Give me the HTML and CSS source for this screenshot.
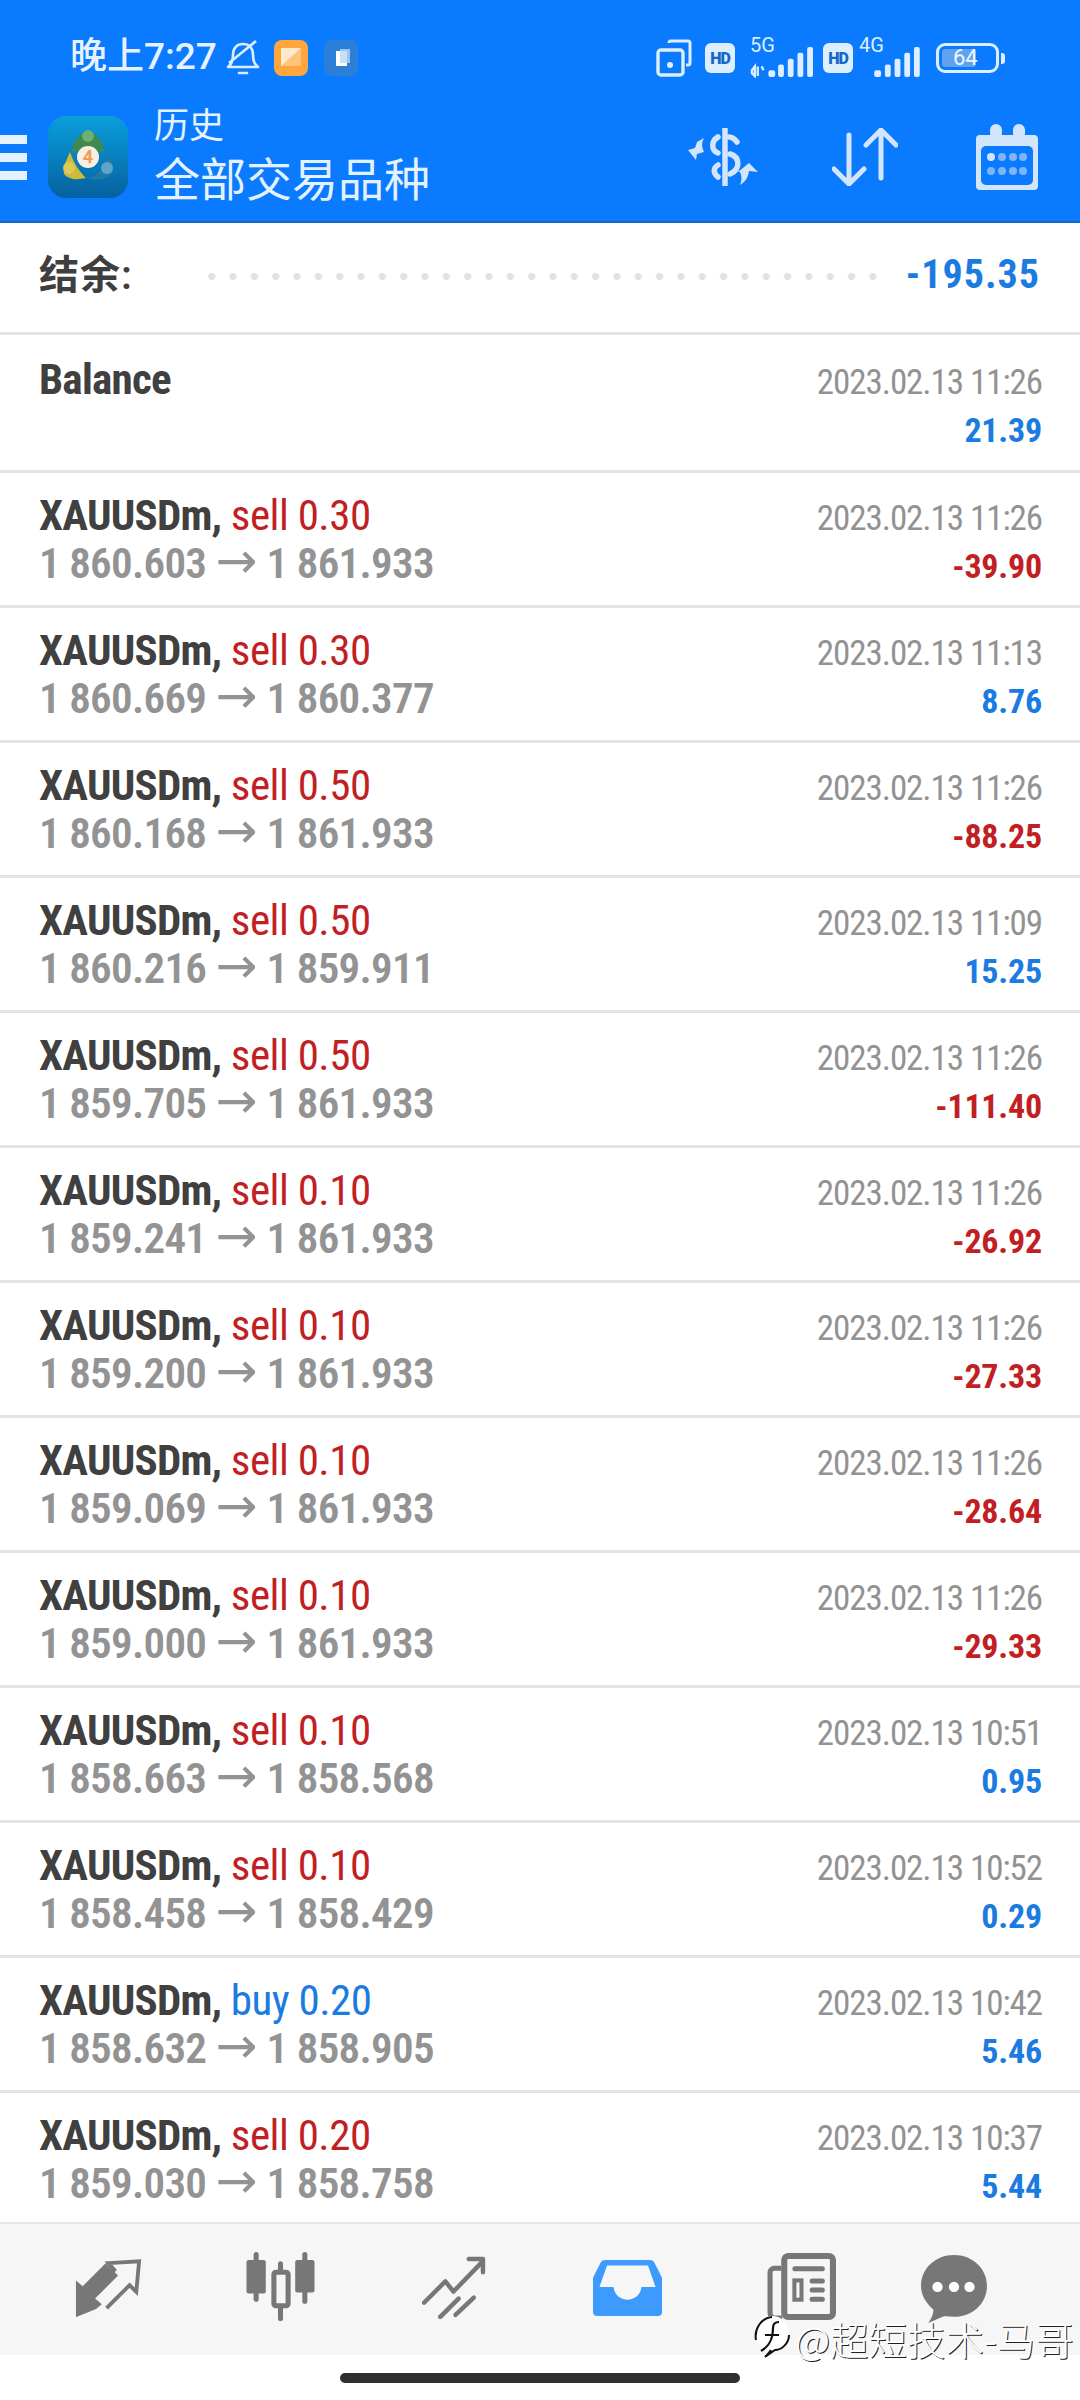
FILE: index.html
```html
<!DOCTYPE html>
<html lang="zh">
<head>
<meta charset="utf-8">
<title>历史</title>
<link rel="stylesheet" href="styles.css">
</head>
<body>
<div class="phone">
<header class="top">
  <div class="status">
    <div class="status-left">
      <span class="clock">晚上7:27</span>
      <svg class="bell" viewBox="0 0 36 38"><path d="M3 28c4-3 5-6 5-12 0-7 4-11 10-11s10 4 10 11c0 6 1 9 5 12z" fill="none" stroke="#dceeff" stroke-width="2.6" stroke-linejoin="round"/><path d="M14 34h8" stroke="#dceeff" stroke-width="2.6" stroke-linecap="round"/><path d="M4 24L31 2" stroke="#dceeff" stroke-width="2.6"/></svg>
      <svg class="app-a" viewBox="0 0 34 36"><rect width="34" height="36" rx="8" fill="#ffa63e"/><path d="M7 8h20v18H7z" fill="#ffe9cc"/><path d="M27 8v18H7z" fill="#ffc37a"/></svg>
      <svg class="app-b" viewBox="0 0 34 36"><rect width="34" height="36" rx="8" fill="#2c7fd8"/><rect x="12" y="11" width="11" height="15" fill="#fff"/><rect x="16" y="9" width="10" height="14" fill="#b8d8f8" opacity=".8"/></svg>
    </div>
    <div class="status-right">
      <svg class="sr-copy" viewBox="0 0 36 38"><path d="M13 4a2 2 0 0 1 2-2h17a2 2 0 0 1 2 2v20a2 2 0 0 1-2 2h-2" fill="none" stroke="#dceeff" stroke-width="3"/><rect x="2" y="11" width="25" height="25" rx="3" fill="none" stroke="#dceeff" stroke-width="3.4"/><circle cx="14" cy="26" r="3" fill="#dceeff"/></svg>
      <span class="hd">HD</span>
      <span class="sig">
        <span class="sig-label">5G</span>
        <svg class="bars b5" viewBox="0 0 66 32"><path d="M3 24l3-4v10l-3-3zM9 20v10M13 20l2 4" stroke="#dceeff" stroke-width="2.4" fill="none"/><rect x="20" y="24" width="7" height="7" rx="2" fill="#dceeff"/><rect x="30" y="18" width="6" height="13" rx="2" fill="#dceeff"/><rect x="40" y="12" width="6" height="19" rx="2" fill="#dceeff"/><rect x="50" y="6" width="6" height="25" rx="2" fill="#dceeff"/><rect x="60" y="0" width="6" height="31" rx="2" fill="#dceeff"/></svg>
      </span>
      <span class="hd hd2">HD</span>
      <span class="sig">
        <span class="sig-label four">4G</span>
        <svg class="bars b4" viewBox="0 0 48 32"><rect x="0" y="24" width="7" height="7" rx="2" fill="#dceeff"/><rect x="11" y="18" width="6" height="13" rx="2" fill="#dceeff"/><rect x="21" y="12" width="6" height="19" rx="2" fill="#dceeff"/><rect x="31" y="6" width="6" height="25" rx="2" fill="#dceeff"/><rect x="41" y="0" width="6" height="31" rx="2" fill="#dceeff"/></svg>
      </span>
      <span class="battery"><span class="battery-fill"></span><span class="battery-num">64</span></span>
      <span class="battery-tip"></span>
    </div>
  </div>
  <div class="bar">
    <div class="burger"><i></i><i></i><i></i></div>
    <svg class="logo" viewBox="0 0 80 82">
      <defs><linearGradient id="lg" x1="0" y1="0" x2="0" y2="1"><stop offset="0" stop-color="#0a9fdc"/><stop offset="1" stop-color="#06609f"/></linearGradient></defs>
      <rect width="80" height="82" rx="18" fill="url(#lg)"/>
      <path d="M40 14c9 4 16 13 16 23-5-3-10-3-16 1-6-4-11-4-16-1 0-10 7-19 16-23z" fill="#3f8a4c"/>
      <circle cx="40" cy="20" r="6" fill="#6cb070"/>
      <path d="M22 36c-4 8-7 16-6 22 5 6 14 6 22 4-6-6-12-14-16-26z" fill="#cdb93a"/>
      <circle cx="21" cy="52" r="6" fill="#dcca55"/>
      <path d="M60 38c4 6 6 12 5 19-7 7-17 8-25 5 9-2 17-10 20-24z" fill="#1f7aa8"/>
      <circle cx="59" cy="52" r="6" fill="#5aa5c8"/>
      <circle cx="40" cy="41" r="11" fill="#f8efe4"/>
      <text x="40" y="47" class="logo-4">4</text>
    </svg>
    <div class="titles">
      <div class="t1">历史</div>
      <div class="t2">全部交易品种</div>
    </div>
    <div class="actions">
      <svg class="act-a" viewBox="0 0 72 58"><path d="M38 1v56" stroke="#d3e5fb" stroke-width="5.5" stroke-linecap="round"/><path d="M50 14c-3-4-6-5-8-5M31 9c-7 4-7 13 0 16M43 26c10 3 11 15 0 20M31 37c-5 3-5 8 0 12" fill="none" stroke="#d3e5fb" stroke-width="5.5" stroke-linecap="round"/><path d="M1 22l7-2 2-6 7-4c-3 6-2 9 0 14l-7 2-1 6z" fill="#d3e5fb"/><path d="M71 44l-9-1c-1 7-4 11-9 14 2-5 2-9 0-13l-2 0 11-9z" fill="#d3e5fb"/></svg>
      <svg class="act-b" viewBox="0 0 66 58"><path d="M17 7v48M2 41l15 15 15-15M49 2v48M34 17L49 2l15 15" fill="none" stroke="#d3e5fb" stroke-width="5" stroke-linecap="round" stroke-linejoin="round"/></svg>
      <svg class="act-c" viewBox="0 0 62 66"><rect x="0" y="11" width="62" height="55" rx="4" fill="#d3e5fb"/><rect x="5" y="22" width="52" height="39" rx="5" fill="#0a7aff"/><rect x="14" y="0" width="12" height="15" rx="6" fill="#d3e5fb"/><rect x="37" y="0" width="12" height="15" rx="6" fill="#d3e5fb"/><circle cx="15" cy="33" r="4" fill="#d3e5fb"/><circle cx="26" cy="33" r="4" fill="#7fb4f5"/><circle cx="37" cy="33" r="4" fill="#7fb4f5"/><circle cx="47" cy="33" r="4" fill="#7fb4f5"/><circle cx="15" cy="47" r="4" fill="#7fb4f5"/><circle cx="26" cy="47" r="4" fill="#7fb4f5"/><circle cx="37" cy="47" r="4" fill="#7fb4f5"/><circle cx="47" cy="47" r="4" fill="#7fb4f5"/></svg>
    </div>
  </div>
</header>

<section class="summary">
  <span class="sum-label">结余:</span>
  <span class="dots"></span>
  <span class="sum-value">-195.35</span>
</section>

<main class="list">
<section class="row balance">
  <div class="line"><span class="sym">Balance</span><span class="date">2023.02.13 11:26</span></div>
  <div class="line end"><span class="pl pos">21.39</span></div>
</section>

<section class="row">
  <div class="line"><span class="lead"><span class="sym">XAUUSDm,</span> <span class="sell">sell 0.30</span></span><span class="date">2023.02.13 11:26</span></div>
  <div class="line"><span class="price">1 860.603 <span class="arrow">→</span> 1 861.933</span><span class="pl neg">-39.90</span></div>
</section>
<section class="row">
  <div class="line"><span class="lead"><span class="sym">XAUUSDm,</span> <span class="sell">sell 0.30</span></span><span class="date">2023.02.13 11:13</span></div>
  <div class="line"><span class="price">1 860.669 <span class="arrow">→</span> 1 860.377</span><span class="pl pos">8.76</span></div>
</section>
<section class="row">
  <div class="line"><span class="lead"><span class="sym">XAUUSDm,</span> <span class="sell">sell 0.50</span></span><span class="date">2023.02.13 11:26</span></div>
  <div class="line"><span class="price">1 860.168 <span class="arrow">→</span> 1 861.933</span><span class="pl neg">-88.25</span></div>
</section>
<section class="row">
  <div class="line"><span class="lead"><span class="sym">XAUUSDm,</span> <span class="sell">sell 0.50</span></span><span class="date">2023.02.13 11:09</span></div>
  <div class="line"><span class="price">1 860.216 <span class="arrow">→</span> 1 859.911</span><span class="pl pos">15.25</span></div>
</section>
<section class="row">
  <div class="line"><span class="lead"><span class="sym">XAUUSDm,</span> <span class="sell">sell 0.50</span></span><span class="date">2023.02.13 11:26</span></div>
  <div class="line"><span class="price">1 859.705 <span class="arrow">→</span> 1 861.933</span><span class="pl neg">-111.40</span></div>
</section>
<section class="row">
  <div class="line"><span class="lead"><span class="sym">XAUUSDm,</span> <span class="sell">sell 0.10</span></span><span class="date">2023.02.13 11:26</span></div>
  <div class="line"><span class="price">1 859.241 <span class="arrow">→</span> 1 861.933</span><span class="pl neg">-26.92</span></div>
</section>
<section class="row">
  <div class="line"><span class="lead"><span class="sym">XAUUSDm,</span> <span class="sell">sell 0.10</span></span><span class="date">2023.02.13 11:26</span></div>
  <div class="line"><span class="price">1 859.200 <span class="arrow">→</span> 1 861.933</span><span class="pl neg">-27.33</span></div>
</section>
<section class="row">
  <div class="line"><span class="lead"><span class="sym">XAUUSDm,</span> <span class="sell">sell 0.10</span></span><span class="date">2023.02.13 11:26</span></div>
  <div class="line"><span class="price">1 859.069 <span class="arrow">→</span> 1 861.933</span><span class="pl neg">-28.64</span></div>
</section>
<section class="row">
  <div class="line"><span class="lead"><span class="sym">XAUUSDm,</span> <span class="sell">sell 0.10</span></span><span class="date">2023.02.13 11:26</span></div>
  <div class="line"><span class="price">1 859.000 <span class="arrow">→</span> 1 861.933</span><span class="pl neg">-29.33</span></div>
</section>
<section class="row">
  <div class="line"><span class="lead"><span class="sym">XAUUSDm,</span> <span class="sell">sell 0.10</span></span><span class="date">2023.02.13 10:51</span></div>
  <div class="line"><span class="price">1 858.663 <span class="arrow">→</span> 1 858.568</span><span class="pl pos">0.95</span></div>
</section>
<section class="row">
  <div class="line"><span class="lead"><span class="sym">XAUUSDm,</span> <span class="sell">sell 0.10</span></span><span class="date">2023.02.13 10:52</span></div>
  <div class="line"><span class="price">1 858.458 <span class="arrow">→</span> 1 858.429</span><span class="pl pos">0.29</span></div>
</section>
<section class="row">
  <div class="line"><span class="lead"><span class="sym">XAUUSDm,</span> <span class="buy">buy 0.20</span></span><span class="date">2023.02.13 10:42</span></div>
  <div class="line"><span class="price">1 858.632 <span class="arrow">→</span> 1 858.905</span><span class="pl pos">5.46</span></div>
</section>
<section class="row">
  <div class="line"><span class="lead"><span class="sym">XAUUSDm,</span> <span class="sell">sell 0.20</span></span><span class="date">2023.02.13 10:37</span></div>
  <div class="line"><span class="price">1 859.030 <span class="arrow">→</span> 1 858.758</span><span class="pl pos">5.44</span></div>
</section>
</main>

<nav class="tabs">
  <svg class="tab" viewBox="0 0 70 62"><path d="M1 60V22l7 6 24-24 13 13-24 24 7 6-6 5-20 8a1 1 0 0 1-1 0z" fill="#777"/><path d="M33 18l8-7-6-7 32-2-3 32-7-7-24 24" fill="none" stroke="#777" stroke-width="4"/></svg>
  <svg class="tab" viewBox="0 0 68 68"><g fill="#777"><rect x="0" y="8" width="19" height="33" rx="2"/><rect x="7" y="0" width="5" height="49" rx="2.5"/><rect x="48" y="8" width="19" height="32" rx="2"/><rect x="55" y="0" width="5" height="51" rx="2.5"/><rect x="31" y="9" width="5" height="59" rx="2.5"/></g><rect x="27" y="20" width="14" height="33" rx="2" fill="#f6f6f6" stroke="#777" stroke-width="5"/></svg>
  <svg class="tab" viewBox="0 0 64 62"><g fill="none" stroke="#777" stroke-width="4.4" stroke-linecap="round" stroke-linejoin="round"><path d="M2 46l21-21 8 10L60 5M46 3h14v13"/><path d="M18 60l18-18"/><path d="M33 58l18-17"/></g></svg>
  <svg class="tab" viewBox="0 0 64 62" preserveAspectRatio="none"><path d="M12 1h40c3 0 4 1 5 3l7 16v37c0 3-2 4-4 4H4c-2 0-4-1-4-4V20L7 4c1-2 2-3 5-3z" fill="#3d9bff"/><path d="M13 7h38l7 23H45c-2 18-24 18-26 0H6z" fill="#f6f6f6"/></svg>
  <svg class="tab" viewBox="0 0 68 66"><path d="M15 64H8c-3 0-5-2-5-5V19c0-2 2-4 4-4h7" fill="none" stroke="#777" stroke-width="5"/><rect x="17" y="3" width="48" height="60" rx="4" fill="#f6f6f6" stroke="#777" stroke-width="6"/><g fill="#777"><rect x="25" y="13" width="32" height="5" rx="2.5"/><rect x="42" y="25" width="15" height="5" rx="2.5"/><rect x="42" y="34" width="15" height="5" rx="2.5"/><rect x="42" y="43" width="15" height="5" rx="2.5"/></g><rect x="27" y="27" width="7" height="19" fill="none" stroke="#777" stroke-width="4"/></svg>
  <svg class="tab" viewBox="0 0 64 66"><path d="M32 0c18 0 32 13 32 30S50 60 32 60c-4 0-8-1-11 0L7 66c3-4 5-8 5-13C5 47 0 39 0 30 0 13 14 0 32 0z" fill="#777"/><circle cx="16" cy="31" r="5" fill="#fff"/><circle cx="32" cy="31" r="5" fill="#fff"/><circle cx="47" cy="31" r="5" fill="#fff"/></svg>
</nav>

<div class="home"><span class="pill"></span></div>

<div class="watermark">
  <svg class="wm-icon" viewBox="0 0 38 46"><circle cx="19" cy="18" r="17" fill="#fff"/><path d="M36 20c0 9-8 15-14 15l-10 7c3-3 5-5 6-7M3 25C1 14 8 3 19 2" fill="none" stroke="#111" stroke-width="2"/><path d="M8 36C18 30 20 22 20 13c0-4 2-6 6-6M12 20h14" fill="none" stroke="#111" stroke-width="2.2"/></svg>
  <span class="wm-text">@超短技术-马哥</span>
</div>
</div>
</body>
</html>
```
FILE: styles.css
```css
* { box-sizing: border-box; }
html, body { margin: 0; padding: 0; background: #fff; }
body { font-family: Roboto, "Noto Sans CJK SC", sans-serif; }
.phone { position: relative; width: 1080px; height: 2400px; overflow: hidden; display: flex; flex-direction: column; background: #fff; }

.top { height: 223px; background: #0a7aff; border-bottom: 2px solid #1268bd; color: #e4f1ff; padding-top: 38px; flex: none; }
.status { display: flex; justify-content: space-between; align-items: center; height: 40px; padding: 0 75px 0 70px; }
.status-left, .status-right { display: flex; align-items: center; }
.clock { font-size: 37px; line-height: 40px; font-weight: 500; color: #e6f2ff; width: 154px; white-space: nowrap; margin-top: -2px; }
.bell { width: 38px; height: 38px; }
.app-a { width: 34px; height: 36px; margin-left: 12px; }
.app-b { width: 34px; height: 36px; margin-left: 16px; }
.sr-copy { width: 36px; height: 38px; }
.hd { width: 30px; height: 30px; border-radius: 6px; background: #dceeff; color: #1268c8; font-size: 16px; font-weight: 900; display: flex; align-items: center; justify-content: center; margin-left: 13px; letter-spacing: -1px; }
.hd2 { margin-left: 9px; }
.sig { position: relative; display: block; }
.bars { display: block; height: 31px; margin-top: 8px; }
.b5 { width: 66px; margin-left: 13px; }
.b4 { width: 47px; margin-left: 21px; }
.sig-label { position: absolute; top: -4px; left: 15px; font-size: 20px; line-height: 20px; color: #dceeff; }
.sig-label.four { left: 6px; }
.battery { position: relative; display: block; width: 63px; height: 30px; margin-left: 15px; border: 3px solid #dceeff; border-radius: 9px; overflow: hidden; }
.battery-fill { position: absolute; left: 3px; top: 3px; bottom: 3px; width: 34px; background: #5fa3ef; border-radius: 3px; }
.battery-num { position: absolute; left: 14px; top: -2px; font-size: 22px; line-height: 28px; color: #eef6ff; }
.battery-tip { width: 4px; height: 11px; background: #dceeff; border-radius: 0 3px 3px 0; margin-left: 2px; }

.bar { display: flex; align-items: center; height: 100px; margin-top: 29px; }
.burger { width: 27px; display: flex; flex-direction: column; gap: 9px; }
.burger i { display: block; height: 9px; background: #e4f1ff; }
.logo { width: 80px; height: 82px; margin-left: 21px; flex: none; }
.logo-4 { font: 700 18px Roboto, sans-serif; fill: #ef9a55; text-anchor: middle; }
.titles { margin-left: 26px; width: 280px; color: #e4f1ff; }
.t1 { font-size: 35px; line-height: 40px; }
.t2 { font-size: 46px; line-height: 54px; margin-top: 6px; white-space: nowrap; }
.actions { display: flex; align-items: center; margin-left: 253px; }
.act-a { width: 72px; height: 58px; }
.act-b { width: 66px; height: 58px; margin-left: 73px; }
.act-c { width: 62px; height: 66px; margin-left: 78px; }

.summary { height: 112px; display: flex; align-items: center; padding: 0 40px 8px; flex: none; border-bottom: 3px solid #e3e3e3; }
.sum-label { font-size: 40px; font-weight: 600; color: #3f3f3f; width: 162px; flex: none; letter-spacing: 1px; margin-left: -1px; margin-top: -3px; }
.dots { width: 680px; height: 7px; flex: none; margin-top: 6px; background-image: radial-gradient(circle, #e2e2e2 3.4px, transparent 3.8px); background-size: 21.33px 7px; background-repeat: repeat-x; }
.sum-value { font-size: 40px; font-weight: 700; font-stretch: 87%; letter-spacing: 1px; color: #1b7be0; margin-left: auto; margin-top: 2px; }

.list { flex: 1; min-height: 0; overflow: hidden; }
.row { height: 135px; border-bottom: 3px solid #e4e4e4; padding: 16.5px 38px 0 39px; display: flex; flex-direction: column; gap: 6px; font-stretch: 75%; }
.row.balance { height: 138px; gap: 14px; padding-top: 19px; }
.line { display: flex; justify-content: space-between; align-items: baseline; height: 42px; }
.line.end { justify-content: flex-end; }
.lead { font-size: 43px; white-space: nowrap; letter-spacing: -.5px; }
.sym { font-size: 43px; font-weight: 700; color: #404040; letter-spacing: -.75px; }
.sell { color: #c11f24; }
.buy { color: #1b7be0; }
.date { font-size: 35px; letter-spacing: -1.05px; color: #929292; white-space: nowrap; }
.price { font-size: 43px; font-weight: 600; letter-spacing: -.7px; color: #939393; white-space: nowrap; }
.arrow { font-family: "DejaVu Sans", sans-serif; font-stretch: normal; font-weight: 400; font-size: 50px; line-height: 0; letter-spacing: 0; }
.pl { font-size: 34px; font-weight: 700; letter-spacing: -.2px; white-space: nowrap; }
.pos { color: #1b7be0; }
.neg { color: #c11f24; }

.tabs { height: 133px; flex: none; background: #f6f6f6; border-top: 2px solid #e6e6e6; position: relative; }
.tab { position: absolute; }
.tab:nth-child(1) { left: 75px; top: 35px; width: 67px; height: 60px; }
.tab:nth-child(2) { left: 246px; top: 28px; width: 70px; height: 69px; }
.tab:nth-child(3) { left: 422px; top: 32px; width: 65px; height: 63px; }
.tab:nth-child(4) { left: 593px; top: 35px; width: 69px; height: 58px; }
.tab:nth-child(5) { left: 767px; top: 28px; width: 69px; height: 69px; }
.tab:nth-child(6) { left: 920px; top: 31px; width: 68px; height: 68px; }

.home { height: 45px; flex: none; display: flex; justify-content: center; padding-top: 18px; }
.pill { display: block; width: 400px; height: 10px; border-radius: 5px; background: #2f2f2f; }

.watermark { position: absolute; left: 753px; top: 2310px; display: flex; align-items: center; gap: 4px; }
.wm-icon { width: 38px; height: 46px; }
.wm-text { font-size: 38.5px; font-family: "Noto Sans CJK SC", sans-serif; font-weight: 300; color: #fff; white-space: nowrap; text-shadow: 1px 1px 0 #222; }
```
